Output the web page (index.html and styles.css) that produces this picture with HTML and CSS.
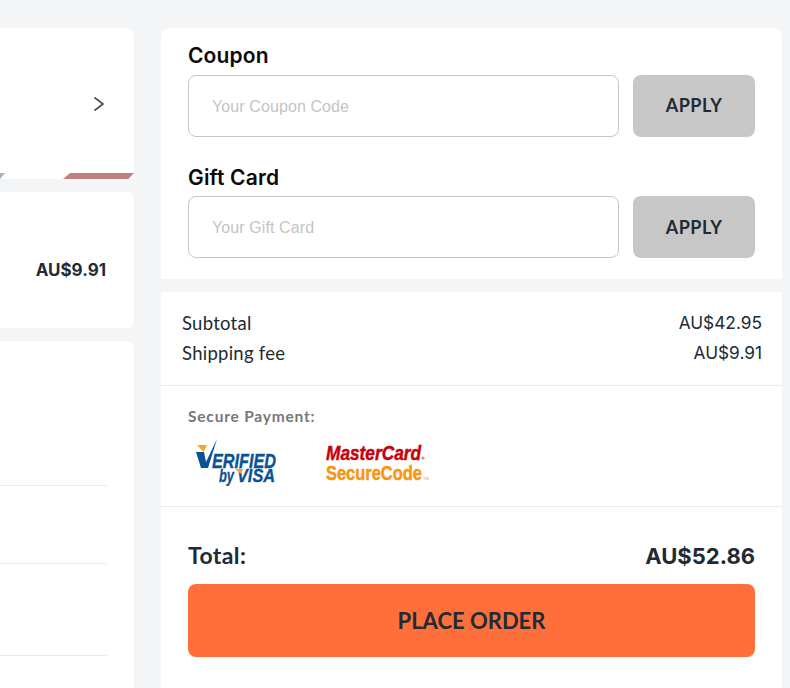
FILE: index.html
```html
<!DOCTYPE html>
<html lang="en">
<head>
<meta charset="utf-8">
<title>Checkout</title>
<link rel="stylesheet" href="styles.css">
</head>
<body>
<div class="page">
  <aside class="left">
    <section class="card product">
      <div class="product-row">
        <svg class="chevron" width="12" height="16" viewBox="0 0 12 16"><path d="M1.5 1.5 L10 8 L1.5 14.5" fill="none" stroke="#4a4a4a" stroke-width="1.6"/></svg>
      </div>
      <div class="strip"><span class="strip-blue"></span><span class="strip-red"></span></div>
    </section>
    <section class="card shipping">
      <span class="ship-price">AU$9.91</span>
    </section>
    <section class="card rows">
      <div class="row row-a"></div>
      <div class="row row-b"></div>
      <div class="row row-c"></div>
    </section>
  </aside>
  <main class="right">
    <section class="card codes">
      <h2 class="code-title">Coupon</h2>
      <div class="code-row">
        <input class="code-input" type="text" placeholder="Your Coupon Code">
        <button class="apply" type="button">APPLY</button>
      </div>
      <h2 class="code-title second">Gift Card</h2>
      <div class="code-row">
        <input class="code-input" type="text" placeholder="Your Gift Card">
        <button class="apply apply-low" type="button">APPLY</button>
      </div>
    </section>
    <section class="card summary">
      <div class="lines">
        <div class="line"><span>Subtotal</span><span class="price">AU$42.95</span></div>
        <div class="line"><span>Shipping fee</span><span class="price">AU$9.91</span></div>
      </div>
      <div class="secure">
        <p class="secure-label">Secure Payment:</p>
        <div class="logos">
          <svg class="logo-visa" width="90" height="52" viewBox="0 0 90 52">
            <path d="M3 6 H13 L9.5 13 Z" fill="#f7a823"/>
            <path d="M2 13 H10 L12 23 L23 0 L14 29 H7 Z" fill="#0a5296"/>
            <text class="visa-a" x="18" y="29" textLength="64" lengthAdjust="spacingAndGlyphs">ERIFIED</text>
            <text class="visa-b" x="25" y="43" textLength="15" lengthAdjust="spacingAndGlyphs">by</text>
            <text class="visa-b" x="43" y="43" textLength="38" lengthAdjust="spacingAndGlyphs">VISA</text>
            <path d="M41 30 H49 L47 35 Z" fill="#f7a823"/>
          </svg>
          <svg class="logo-mc" width="110" height="50" viewBox="0 0 110 50">
            <text class="mc-a" x="1" y="20" textLength="95" lengthAdjust="spacingAndGlyphs">MasterCard</text>
            <circle cx="98" cy="18" r="1.6" fill="#d98a7a"/>
            <text class="mc-b" x="1" y="40" textLength="96" lengthAdjust="spacingAndGlyphs">SecureCode</text>
            <text class="mc-tm" x="98" y="40">TM</text>
          </svg>
        </div>
      </div>
      <div class="checkout">
        <div class="total"><span class="total-label">Total:</span><span class="total-value">AU$52.86</span></div>
        <button class="place" type="button">PLACE ORDER</button>
      </div>
    </section>
  </main>
</div>
</body>
</html>
```
FILE: styles.css
```css
* { box-sizing: border-box; }
html, body { margin: 0; height: 100%; }
body {
  background: #f4f5f7;
  font-family: Lato, "Open Sans", sans-serif;
  color: #222a33;
  overflow: hidden;
}
.page {
  display: flex;
  gap: 27px;
  padding: 28px 8px 0 0;
  height: 688px;
  overflow: hidden;
}
.left { width: 134px; display: flex; flex-direction: column; gap: 13px; flex: none; }
.right { width: 621px; display: flex; flex-direction: column; gap: 13px; flex: none; }
.card { background: #fff; border-radius: 8px; }

.left .card { border-radius: 0 8px 8px 0; flex: none; }
.product { height: 151px; display: flex; flex-direction: column; border-bottom-right-radius: 0 !important; }
.product-row { flex: 1; display: flex; justify-content: flex-end; align-items: center; padding: 6px 29px 0 0; margin-bottom: 6px; }
.chevron { display: block; margin-top: 7px; }
.strip { height: 6px; display: flex; justify-content: space-between; flex: none; }
.strip-blue { width: 5px; background: #9db4c8; clip-path: polygon(0 0, 100% 0, 0 100%); }
.strip-red { width: 71px; background: #c08080; clip-path: polygon(10% 0, 100% 0, 92% 100%, 0 100%); }

.shipping { height: 136px; display: flex; align-items: center; justify-content: flex-end; padding-right: 28px; padding-top: 19px; }
.ship-price { font-weight: 700; font-family: Inter, sans-serif; font-size: 17px; color: #222a33; }

.rows { height: 400px; padding-right: 27px; }
.row { border-bottom: 1px solid #ebebeb; }
.row-a { height: 145px; }
.row-b { height: 78px; }
.row-c { height: 92px; }

.codes { height: 251px; padding: 16px 27px 0; border-radius: 8px 8px 0 0; }
.code-title { margin: 0; font-size: 21px; letter-spacing: .15px; line-height: 24px; font-weight: 600; color: #0a0a0a; font-family: Inter, sans-serif; height: 31px; }
.code-title.second { margin-top: 28px; height: 31px; padding-top: 1px; }
.code-row { display: flex; gap: 14px; height: 62px; }
.code-input {
  flex: 1; min-width: 0;
  border: 1px solid #c6c6c6;
  border-radius: 8px;
  padding: 2px 23px 0;
  font-family: "Liberation Sans", Arial, sans-serif;
  font-size: 16px;
  letter-spacing: .1px;
  outline: none;
}
.code-input::placeholder { color: #c4c4c4; opacity: 1; }
.apply {
  width: 122px; border: 0; border-radius: 8px;
  background: #c7c7c7; color: #222a33;
  font-family: Lato, sans-serif; font-size: 18px; font-weight: 700; letter-spacing: .5px;
  padding: 0 0 2px;
}
.apply-low { padding: 0; }

.summary { flex: 1; border-radius: 0; }
.lines { height: 94px; padding: 16px 20px 0 21px; border-bottom: 1px solid #ebebeb; }
.line { display: flex; justify-content: space-between; font-size: 18.5px; letter-spacing: .25px; line-height: 30px; color: #222a33; }
.price { font-family: Inter, sans-serif; font-size: 17.3px; letter-spacing: 0; }
.secure { height: 121px; padding: 21px 27px 0; border-bottom: 1px solid #ebebeb; }
.secure-label { margin: 0; font-size: 15.5px; line-height: 19px; font-weight: 700; color: #777; letter-spacing: .8px; }
.logos { display: flex; align-items: flex-start; gap: 41px; margin-top: 13px; padding-left: 6px; height: 53px; }
.logo-visa, .logo-mc { display: block; flex: none; }
.logo-mc { margin-top: 1px; }
.visa-a { font: italic 700 21px "Liberation Sans", sans-serif; fill: #0a5296; stroke: #0a5296; stroke-width: .4px; }
.visa-b { font: italic 700 18px "Liberation Sans", sans-serif; fill: #0a5296; stroke: #0a5296; stroke-width: .3px; }
.mc-a { font: italic 700 21px "Liberation Sans", sans-serif; fill: #c8000a; stroke: #c8000a; stroke-width: .5px; }
.mc-b { font: 700 21px "Liberation Sans", sans-serif; fill: #f7960f; stroke: #f7960f; stroke-width: .5px; }
.mc-tm { font: 400 4px "Liberation Sans", sans-serif; fill: #f7960f; }

.checkout { padding: 35px 27px 0; }
.total { display: flex; justify-content: space-between; align-items: center; height: 28px; margin-bottom: 14px; }
.total-label { font-size: 23px; font-weight: 700; letter-spacing: .4px; margin-top: -2px; }
.total-value { font-size: 22px; font-weight: 700; font-family: Inter, sans-serif; }
.place {
  display: block; width: 100%; height: 73px;
  border: 0; border-radius: 8px;
  background: #ff6f3c; color: #222a33;
  font-family: Lato, sans-serif; font-size: 22px; font-weight: 700;
}
```
